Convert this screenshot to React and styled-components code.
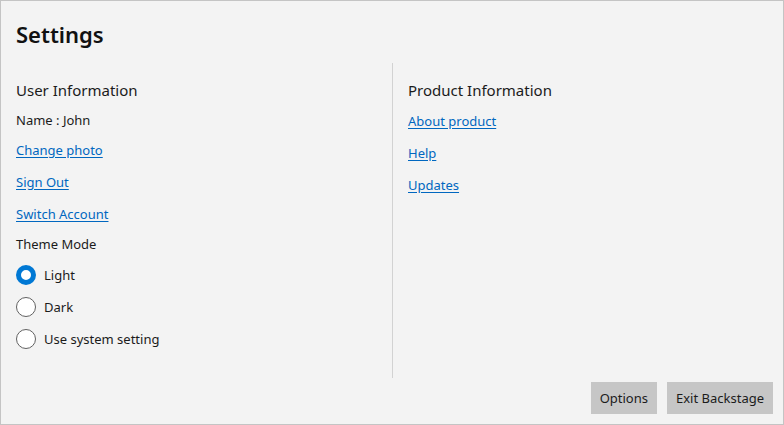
import React, { useState } from "react";
import styled, { createGlobalStyle } from "styled-components";

const GlobalStyle = createGlobalStyle`
  html, body {
    margin: 0;
    padding: 0;
    background: #f3f3f3;
  }
  body {
    font-family: "Noto Sans", "Open Sans", "Liberation Sans", sans-serif;
    color: #1b1b1b;
  }
`;

const Frame = styled.div`
  box-sizing: border-box;
  width: 784px;
  height: 425px;
  border: 1px solid #c4c4c4;
  background: #f3f3f3;
  display: flex;
  flex-direction: column;
`;

const Title = styled.h1`
  margin: 0;
  padding: 17px 0 0 15px;
  height: 45px;
  font-size: 22px;
  font-weight: 600;
  line-height: 32px;
  color: #111;
`;

const Body = styled.div`
  flex: 1;
  display: flex;
  min-height: 0;
`;

const Column = styled.div`
  width: ${(p) => p.width};
  box-sizing: border-box;
  padding: 17px 0 0 15px;
  display: flex;
  flex-direction: column;
`;

const Divider = styled.div`
  width: 1px;
  background: #d2d2d2;
`;

const Heading = styled.div`
  font-size: 15px;
  line-height: 20px;
  color: #1b1b1b;
`;

const Line = styled.div`
  font-size: 13px;
  line-height: 20px;
  margin-top: ${(p) => p.top}px;
`;

const Link = styled.a`
  font-size: 13px;
  line-height: 20px;
  margin-top: ${(p) => p.top}px;
  color: #0067c0;
  text-decoration: underline;
  text-underline-offset: 2px;
  cursor: pointer;
  align-self: flex-start;
`;

const RadioRow = styled.label`
  display: flex;
  align-items: center;
  gap: 8px;
  height: 20px;
  margin-top: ${(p) => p.top}px;
  font-size: 13px;
  cursor: pointer;
`;

const RadioDot = styled.span`
  box-sizing: border-box;
  width: 20px;
  height: 20px;
  border-radius: 50%;
  border: ${(p) => (p.checked ? "5px solid #0078d4" : "1px solid #616161")};
  background: #fff;
  flex-shrink: 0;
`;

const Footer = styled.div`
  height: 46px;
  display: flex;
  justify-content: flex-end;
  align-items: flex-start;
  gap: 10px;
  padding: 4px 10px 0 0;
  box-sizing: border-box;
`;

const Button = styled.button`
  height: 32px;
  padding: 0 9px;
  border: none;
  background: #c6c6c6;
  font-family: inherit;
  font-size: 13px;
  color: #1b1b1b;
  cursor: pointer;
`;

const modes = ["Light", "Dark", "Use system setting"];

export default function App() {
  const [mode, setMode] = useState("Light");
  return (
    <>
      <GlobalStyle />
      <Frame>
        <Title>Settings</Title>
        <Body>
          <Column width="391px">
            <Heading>User Information</Heading>
            <Line top={10}>Name : John</Line>
            <Link top={10}>Change photo</Link>
            <Link top={12}>Sign Out</Link>
            <Link top={12}>Switch Account</Link>
            <Line top={10}>Theme Mode</Line>
            {modes.map((m, i) => (
              <RadioRow key={m} top={i === 0 ? 11 : 12} onClick={() => setMode(m)}>
                <RadioDot checked={mode === m} />
                {m}
              </RadioRow>
            ))}
          </Column>
          <Divider />
          <Column width="375px">
            <Heading>Product Information</Heading>
            <Link top={11}>About product</Link>
            <Link top={12}>Help</Link>
            <Link top={12}>Updates</Link>
          </Column>
        </Body>
        <Footer>
          <Button>Options</Button>
          <Button>Exit Backstage</Button>
        </Footer>
      </Frame>
    </>
  );
}
